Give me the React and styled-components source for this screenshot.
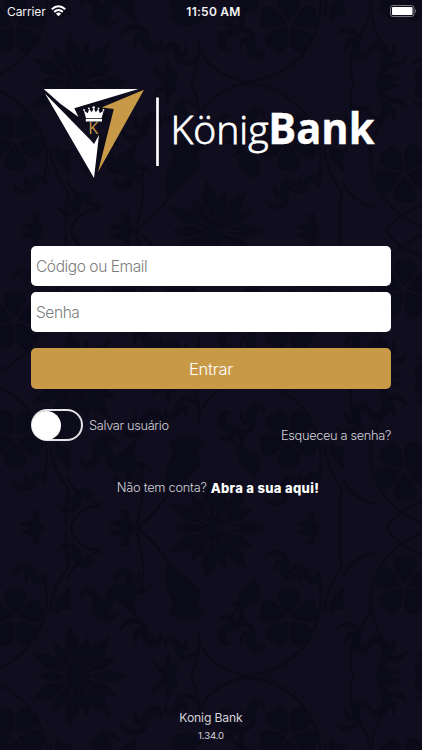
import React, { useState } from "react";
import styled, { createGlobalStyle } from "styled-components";

const GlobalStyle = createGlobalStyle`
  * {
    box-sizing: border-box;
  }
  body {
    margin: 0;
    background: #100e1e;
    font-family: Inter, "Liberation Sans", sans-serif;
  }
`;

const Screen = styled.main`
  position: relative;
  display: flex;
  flex-direction: column;
  width: 422px;
  height: 750px;
  overflow: hidden;
  color: #d3d2d8;
  background: #100e1e;
`;
const Wallpaper = styled.svg`
  position: absolute;
  inset: 0;
`;
const StatusBar = styled.header`
  position: relative;
  display: grid;
  grid-template-columns: 1fr auto 1fr;
  align-items: center;
  height: 22px;
  padding: 0 5px 0 7px;
  color: #f4f4f6;
  font-size: 12px;
`;
const Carrier = styled.div`
  display: flex;
  align-items: center;
  gap: 5px;
  letter-spacing: -0.1px;
`;
const Clock = styled.time`
  margin-left: 3px;
  font-weight: 600;
  font-size: 12px;
  letter-spacing: 0.25px;
`;
const BatteryIcon = styled.svg`
  justify-self: end;
`;
const Logo = styled.svg`
  position: relative;
  display: block;
  flex: none;
  margin: 58px 0 0 38px;
`;
const Form = styled.form`
  position: relative;
  display: flex;
  flex-direction: column;
  padding: 56px 31px 0;
`;
const Field = styled.input`
  width: 100%;
  height: 40px;
  margin-bottom: 6px;
  padding: 0 5px;
  border: 0;
  border-radius: 5px;
  background: #fff;
  color: #222;
  font: 300 15.5px Inter, sans-serif;
  letter-spacing: -0.42px;
  outline: 0;
  &::placeholder {
    color: #7c7c7c;
    opacity: 1;
  }
`;
const SubmitButton = styled.button`
  height: 41px;
  margin-top: 10px;
  padding: 0;
  border: 0;
  border-radius: 5px;
  background: #c89947;
  color: #fff;
  font: 300 16.5px Inter, sans-serif;
  letter-spacing: -0.2px;
`;
const Options = styled.div`
  display: flex;
  align-items: flex-start;
  justify-content: space-between;
  padding-top: 20px;
  font-size: 12.8px;
  font-weight: 300;
  letter-spacing: -0.34px;
`;
const SaveUser = styled.div`
  display: flex;
  align-items: center;
  gap: 6px;
`;
const Toggle = styled.button`
  display: flex;
  justify-content: ${({ $on }) => ($on ? "flex-end" : "flex-start")};
  align-items: center;
  width: 52px;
  height: 32px;
  padding: 0;
  border: 2px solid #e4e4e8;
  border-radius: 16px;
  background: #0d0c1a;
`;
const Knob = styled.span`
  width: 29px;
  height: 29px;
  margin: 0 -1px;
  border-radius: 50%;
  background: #fff;
`;
const Forgot = styled.span`
  padding-top: 19px;
  line-height: 16px;
`;
const SignUp = styled.p`
  position: relative;
  display: flex;
  justify-content: center;
  gap: 4px;
  margin: 34px 0 0 14px;
  font-size: 12.8px;
  font-weight: 300;
  line-height: 20px;
  letter-spacing: -0.26px;
`;
const SignUpLink = styled.strong`
  color: #fff;
  font-weight: 800;
  font-size: 13px;
  letter-spacing: 0.33px;
`;
const Footer = styled.footer`
  position: relative;
  margin-top: auto;
  padding-bottom: 8px;
  text-align: center;
  font-size: 12.2px;
  line-height: 17px;
  letter-spacing: -0.15px;
`;
const Version = styled.div`
  padding-top: 3px;
  font-size: 9.6px;
  line-height: 13px;
`;

const Petals = ({ x, y, r = 0 }) => (
  <g transform={`translate(${x} ${y}) rotate(${r})`}>
    {[0, 72, 144, 216, 288].map((a) => (
      <path
        key={a}
        transform={`rotate(${a})`}
        d="M0 -3C-7 -10 -15 -20 -10 -27C-5 -32 -2 -28 0 -29C3 -32 8 -30 11 -25C13 -18 6 -10 0 -3Z"
      />
    ))}
  </g>
);

const Blossom = ({ x, y }) => (
  <g transform={`translate(${x} ${y})`}>
    {[0, 28, 52, 76, 100, 126, 152, 180, 208, 234, 260, 284, 308, 332].map(
      (a, i) => (
        <path
          key={a}
          transform={`rotate(${a}) scale(${i % 2 ? 0.76 : 0.92})`}
          d="M5 0Q22 -3 29 -6Q38 -9 43 -5L57 0L43 5Q38 9 29 6Q22 3 5 0Z"
        />
      )
    )}
    <circle r="12" />
    <path
      d="M-15 -8Q-7 -7 -4 0Q-7 7 -15 8M3 0L22 -7M3 0L24 0M3 0L22 7M8 -9L12 -18M8 9L12 18"
      fill="none"
      stroke="#131121"
    />
  </g>
);

const Sprig = ({ x, y, r = 0, s = 1 }) => (
  <path
    transform={`translate(${x} ${y}) rotate(${r}) scale(${s})`}
    d="M0 0Q-8 -7 -20 -5Q-14 -8 -17 -14Q-10 -12 -8 -8Q-9 -17 -3 -25Q-2 -14 2 -9Q9 -20 18 -19Q9 -13 9 -6Q16 -9 25 -4Q13 -3 10 4Q4 9 0 0Z"
  />
);

const Scroll = ({ x, y, r = 0, s = 1 }) => (
  <path
    transform={`translate(${x} ${y}) rotate(${r}) scale(${s})`}
    d="M0 0C-6 -9 -3 -17 5 -19C-2 -25 -13 -19 -16 -13C-16 -24 -4 -31 6 -25C17 -19 10 -10 17 -7C22 -5 25 -9 23 -13C30 -8 27 1 18 2C9 3 5 -5 4 -12C-1 -8 2 -4 0 0Z"
  />
);

// Upper half of one damask repeat, the lower half is its mirror
const HalfDamask = () => (
  <>
    <Petals x={15} y={90} />
    <Petals x={289} y={90} />
    <Petals x={404} y={58} r={4} />
    <Blossom x={215} y={0} />
    <Blossom x={78} y={149} />
    <Sprig x={44} y={0} r={-90} />
    <Sprig x={135} y={0} r={-90} s={1.1} />
    <Sprig x={320} y={0} r={-90} />
    <Sprig x={172} y={149} r={-90} />
    <Sprig x={374} y={149} r={90} s={1.1} />
    <Scroll x={70} y={38} s={0.85} />
    <Scroll x={28} y={58} r={-15} s={0.8} />
    <Scroll x={302} y={58} r={-15} s={0.8} />
    <Scroll x={274} y={45} r={20} s={0.85} />
    <Scroll x={138} y={42} r={180} s={0.9} />
    <Scroll x={108} y={66} r={195} />
    <Scroll x={136} y={117} />
    <Scroll x={185} y={110} r={180} s={0.8} />
    <Scroll x={218} y={91} r={85} />
    <Scroll x={240} y={117} r={20} s={0.9} />
    <Scroll x={345} y={118} r={20} s={0.9} />
    <Scroll x={393} y={109} r={180} s={0.9} />
    <Scroll x={412} y={130} r={70} s={0.9} />
    <path d="M167 35C176 43 193 50 201 65L196 78L204 83Q203 90 190 92Q172 92 170 83L173 74Q162 59 167 35Z" />
    <path d="M255 52Q266 63 254 76Q240 78 226 94Q230 82 240 79Q231 65 255 52Z" />
    <path d="M125 56Q106 55 105 70Q92 75 91 85L105 89Q114 80 113 69Q121 77 138 90Q132 72 136 66Q129 63 125 56Z" />
    <path d="M57 86Q49 75 72 57Q65 71 74 83Q66 78 57 86Z" />
    <path d="M331 86Q323 75 346 57Q339 71 348 83Q340 78 331 86Z" />
    <g fill="none" stroke="#0b0a18" strokeWidth="2.5" strokeLinecap="round">
      <path d="M43 50Q53 79 37 106Q22 130 0 140M317 45Q329 85 303 120Q275 148 243 147Q213 141 200 116" />
      <path d="M422 4Q371 28 371 72Q372 96 383 112M386 0Q399 18 422 26" />
      <path d="M66 0Q65 26 68 39Q53 59 50 81M340 0Q339 26 342 39Q327 59 324 81" />
      <path d="M137 0Q167 25 174 45M199 106Q200 129 191 149M354 149Q344 129 361 100Q372 83 371 70" />
      <path d="M68 50Q75 31 100 24M343 48Q352 29 375 24M136 3Q146 32 142 60M70 0Q79 22 99 22" />
    </g>
    <path
      d="M322 54Q335 91 308 123Q275 154 237 148M48 54Q61 91 34 123M369 75Q365 43 389 20"
      fill="none"
      stroke="#0b0a18"
      strokeWidth="1.5"
      strokeDasharray="1.5 3"
    />
  </>
);

const Background = () => (
  <Wallpaper width="422" height="750" aria-hidden="true">
    <defs>
      <g id="half-damask" fill="#0b0a18">
        <HalfDamask />
      </g>
      <clipPath id="half-clip">
        <rect width="422" height="148.5" />
      </clipPath>
    </defs>
    {[-66, 231, 528].map((top) => (
      <g key={top} transform={`translate(0 ${top})`}>
        <g clipPath="url(#half-clip)">
          <use href="#half-damask" />
        </g>
        <g transform="translate(0 297) scale(1 -1)" clipPath="url(#half-clip)">
          <use href="#half-damask" />
        </g>
      </g>
    ))}
  </Wallpaper>
);

const KonigLogo = () => (
  <Logo width="346" height="110" viewBox="38 80 346 110" aria-label="KönigBank">
    <path d="M43.7 89H138.5L74.3 108.3L78.5 117L60 103.5Z" fill="#fff" />
    <path d="M45 93.5L90 139.5L94 144L99 135L94 178Z" fill="#fff" />
    <path d="M144 89.7L98 172L113.8 109L101.5 107.5Z" fill="#c89947" />
    <g fill="#fff">
      <path d="M86 118.3L83.8 110.5L87.8 113.2L89.2 109L91.8 112.3L93.7 108L95.8 112.3L98.4 109L99.8 113.2L103.7 110.5L101.6 118.3Z" />
      <circle cx="84" cy="110" r=".9" />
      <circle cx="88.9" cy="108.4" r=".9" />
      <circle cx="93.7" cy="107.5" r="1.3" />
      <circle cx="98.5" cy="108.4" r=".9" />
      <circle cx="103.5" cy="110" r=".9" />
      <path d="M85.8 119H102V121.5H85.8Z" />
    </g>
    <text
      x="88.3"
      y="134"
      fill="#c89947"
      fontFamily="Open Sans, sans-serif"
      fontSize="15.8"
      textLength="10"
      lengthAdjust="spacingAndGlyphs"
    >
      K
    </text>
    <path d="M157.5 97.5V166" stroke="#fff" strokeWidth="2.7" />
    <text
      x="170.5"
      y="144"
      fill="#fff"
      fontFamily="Open Sans, sans-serif"
      fontSize="38.3"
      fontWeight="300"
      stroke="#fff"
      strokeWidth=".8"
      textLength="98"
      lengthAdjust="spacingAndGlyphs"
    >
      König
    </text>
    <text
      x="268.2"
      y="144"
      fill="#fff"
      fontFamily="Open Sans, sans-serif"
      fontSize="43.8"
      fontWeight="700"
      stroke="#fff"
      strokeWidth=".4"
      textLength="106.3"
      lengthAdjust="spacingAndGlyphs"
    >
      Bank
    </text>
  </Logo>
);

const App = () => {
  const [saveUser, setSaveUser] = useState(false);

  return (
    <>
      <GlobalStyle />
      <Screen>
        <Background />
        <StatusBar>
          <Carrier>
            Carrier
            <svg width="15" height="12" viewBox="0 0 14 11" fill="none">
              <path
                d="M.7 3.9Q7 -1.7 13.3 3.9M3 6.3Q7 2.9 11 6.3"
                stroke="#fff"
                strokeWidth="1.9"
              />
              <path d="M4.6 8Q7 6 9.4 8L7 10.5Z" fill="#fff" />
            </svg>
          </Carrier>
          <Clock>11:50 AM</Clock>
          <BatteryIcon width="27" height="12" viewBox="0 0 27 12">
            <rect
              x=".5"
              y=".5"
              width="23.5"
              height="11"
              rx="2.5"
              fill="none"
              stroke="#77767f"
            />
            <rect x="2" y="2" width="20.5" height="8" rx="1" fill="#fff" />
            <path d="M25 4Q27 6 25 8Z" fill="#77767f" />
          </BatteryIcon>
        </StatusBar>
        <KonigLogo />
        <Form onSubmit={(e) => e.preventDefault()}>
          <Field placeholder="Código ou Email" />
          <Field type="password" placeholder="Senha" />
          <SubmitButton>Entrar</SubmitButton>
          <Options>
            <SaveUser>
              <Toggle
                type="button"
                $on={saveUser}
                onClick={() => setSaveUser(!saveUser)}
              >
                <Knob />
              </Toggle>
              <span>Salvar usuário</span>
            </SaveUser>
            <Forgot>Esqueceu a senha?</Forgot>
          </Options>
        </Form>
        <SignUp>
          <span>Não tem conta?</span>
          <SignUpLink>Abra a sua aqui!</SignUpLink>
        </SignUp>
        <Footer>
          Konig Bank
          <Version>1.34.0</Version>
        </Footer>
      </Screen>
    </>
  );
};

export default App;
